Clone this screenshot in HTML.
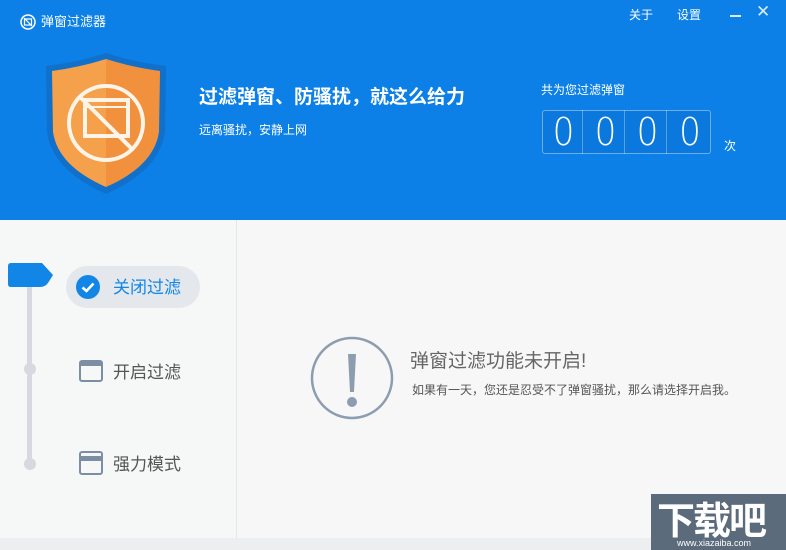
<!DOCTYPE html>
<html><head><meta charset="utf-8"><style>
*{margin:0;padding:0;box-sizing:border-box}
body{width:786px;height:550px;overflow:hidden;background:#f7f7f7;font-family:"Liberation Sans","Noto Sans CJK SC",sans-serif;position:relative}
.hd{position:absolute;left:0;top:0;width:786px;height:220px;background:#0c80e6;color:#fff}
.a{position:absolute;white-space:nowrap}
.left{position:absolute;left:0;top:220px;width:237px;height:318px;background:#f6f7f7;border-right:1px solid #e4e6e8}
.cell{position:absolute;top:110px;width:42px;height:44px;border-right:1px solid rgba(255,255,255,.35);font-size:38px;text-align:center;line-height:44px;font-family:"DejaVu Sans","Liberation Sans",sans-serif;font-weight:200;transform:scaleX(.9)}
</style></head><body>
<div class="hd">
 <svg class="a" style="left:20px;top:14px" width="16" height="16" viewBox="0 0 16 16"><circle cx="8" cy="8" r="7" fill="none" stroke="#fff" stroke-width="1.5"/><rect x="4.5" y="5" width="7" height="6" fill="none" stroke="#fff" stroke-width="1.2"/><line x1="4" y1="4" x2="12" y2="12" stroke="#fff" stroke-width="1.2"/></svg>
 <div class="a" style="left:41px;top:11px;font-size:13px">弹窗过滤器</div>
 <div class="a" style="left:629px;top:6px;font-size:12px">关于</div>
 <div class="a" style="left:677px;top:6px;font-size:12px">设置</div>
 <div class="a" style="left:730px;top:15px;width:11px;height:2px;background:#fff;opacity:.85"></div>
 <div class="a" style="left:756px;top:2px;font-size:17px;opacity:.85">✕</div>
 <svg class="a" style="left:44px;top:52px" width="124" height="143" viewBox="0 0 124 143">
  <path d="M62 1 Q35 10 2 14 L3 80 Q8 118 62 142 Q116 118 121 80 L122 14 Q89 10 62 1Z" fill="#1565b8" opacity=".6"/>
  <path d="M62 7 Q37 15 8 19 L9 80 Q14 114 62 135 Z" fill="#f5a04a"/>
  <path d="M62 7 Q87 15 116 19 L115 80 Q110 114 62 135 Z" fill="#f2913d"/>
  <circle cx="62" cy="71" r="37" fill="none" stroke="#fff4e8" stroke-width="4"/>
  <rect x="41" y="48" width="43" height="36" fill="none" stroke="#fff4e8" stroke-width="4"/>
  <line x1="41" y1="55" x2="84" y2="55" stroke="#fff4e8" stroke-width="2"/>
  <line x1="37" y1="46" x2="87" y2="96" stroke="#fff4e8" stroke-width="4"/>
 </svg>
 <div class="a" style="left:199px;top:82px;font-size:19px;font-weight:bold">过滤弹窗、防骚扰，就这么给力</div>
 <div class="a" style="left:199px;top:121px;font-size:12px">远离骚扰，安静上网</div>
 <div class="a" style="left:541px;top:81px;font-size:12px">共为您过滤弹窗</div>
 <div class="a" style="left:542px;top:110px;width:169px;height:44px;border:1px solid rgba(255,255,255,.4);border-radius:3px;background:#0a78dc"></div>
 <div class="cell" style="left:543px">0</div>
 <div class="cell" style="left:585px">0</div>
 <div class="cell" style="left:627px">0</div>
 <div class="cell" style="left:669px;border:none">0</div>
 <div class="a" style="left:724px;top:137px;font-size:12px">次</div>
</div>
<div class="left">
 <div class="a" style="left:27px;top:52px;width:5px;height:196px;background:#d6d9e0"></div>
 <div class="a" style="left:24px;top:143px;width:12px;height:12px;border-radius:50%;background:#d6d9e0"></div>
 <div class="a" style="left:24px;top:238px;width:12px;height:12px;border-radius:50%;background:#d6d9e0"></div>
 <svg class="a" style="left:8px;top:43px" width="46" height="27" viewBox="0 0 46 27"><path d="M3 0H34L45 12L40 20Q37 24 32 24H3Q0 24 0 21V3Q0 0 3 0Z" fill="#1186e6"/></svg>
 <div class="a" style="left:66px;top:46px;width:134px;height:42px;border-radius:21px;background:#e4e8ed"></div>
 <svg class="a" style="left:76px;top:55px" width="24" height="24" viewBox="0 0 24 24"><circle cx="12" cy="12" r="12" fill="#1186e6"/><path d="M6.5 12.5L10.5 16L17.5 8.5" fill="none" stroke="#fff" stroke-width="2.6"/></svg>
 <div class="a" style="left:113px;top:53px;font-size:17px;color:#1186e6">关闭过滤</div>
 <svg class="a" style="left:79px;top:140px" width="24" height="22" viewBox="0 0 24 22"><rect x="1" y="1" width="22" height="20" rx="2" fill="none" stroke="#7c8ea3" stroke-width="2"/><rect x="1" y="1" width="22" height="5" fill="#7c8ea3"/></svg>
 <div class="a" style="left:113px;top:138px;font-size:17px;color:#555">开启过滤</div>
 <svg class="a" style="left:79px;top:231px" width="24" height="24" viewBox="0 0 24 24"><rect x="1" y="1" width="22" height="22" rx="2" fill="none" stroke="#7c8ea3" stroke-width="2"/><rect x="1" y="5" width="22" height="5" fill="#7c8ea3"/></svg>
 <div class="a" style="left:113px;top:230px;font-size:17px;color:#555">强力模式</div>
</div>
<svg class="a" style="left:310px;top:336px" width="84" height="84" viewBox="0 0 84 84"><circle cx="42" cy="42" r="40" fill="none" stroke="#8c9db0" stroke-width="2.5"/><path d="M38 18H46L44 56H40Z" fill="#8c9db0"/><circle cx="42" cy="66" r="5" fill="#8c9db0"/></svg>
<div class="a" style="left:410px;top:346px;font-size:19px;color:#666">弹窗过滤功能未开启!</div>
<div class="a" style="left:412px;top:381px;font-size:12px;color:#555">如果有一天，您还是忍受不了弹窗骚扰，那么请选择开启我。</div>
<div class="a" style="left:0;top:538px;width:786px;height:12px;background:#eceeef"></div>
<div class="a" style="left:651px;top:494px;width:135px;height:56px;background:#5b6b7c;color:#fff">
 <div class="a" style="left:6px;top:-4px;font-size:38px;font-weight:bold;letter-spacing:-2px">下载吧</div>
 <div class="a" style="left:26px;top:44px;font-size:9px">www.xiazaiba.com</div>
</div>
</body></html>
